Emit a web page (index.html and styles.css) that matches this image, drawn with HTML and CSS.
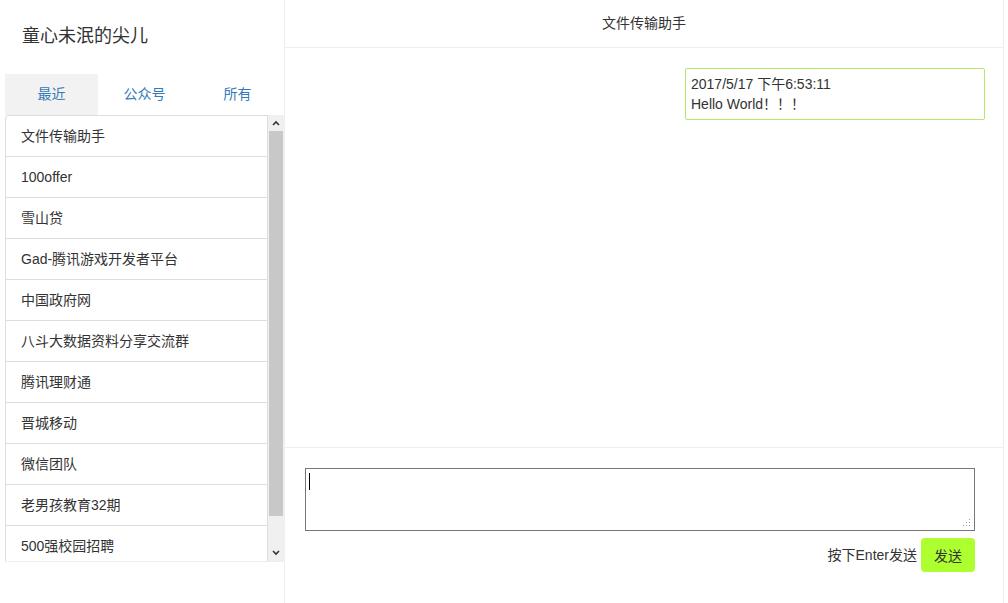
FILE: index.html
```html
<!DOCTYPE html>
<html lang="zh">
<head>
<meta charset="utf-8">
<title>WeChat</title>
<link rel="stylesheet" href="styles.css">
</head>
<body>
<div class="app">
  <aside class="side">
    <div class="user">童心未泯的尖儿</div>
    <div class="tabs">
      <div class="tab active">最近</div>
      <div class="tab">公众号</div>
      <div class="tab">所有</div>
    </div>
    <div class="listwrap">
      <ul class="list">
        <li>文件传输助手</li>
        <li>100offer</li>
        <li>雪山贷</li>
        <li>Gad-腾讯游戏开发者平台</li>
        <li>中国政府网</li>
        <li>八斗大数据资料分享交流群</li>
        <li>腾讯理财通</li>
        <li>晋城移动</li>
        <li>微信团队</li>
        <li>老男孩教育32期</li>
        <li>500强校园招聘</li>
      </ul>
      <div class="sbar">
        <div class="sbtn"><svg width="8" height="6" viewBox="0 0 8 6"><path d="M1 5 L4 2 L7 5" fill="none" stroke="#333" stroke-width="1.6"/></svg></div>
        <div class="thumb"></div>
        <div class="strack"></div>
        <div class="sbtn"><svg width="8" height="6" viewBox="0 0 8 6"><path d="M1 1 L4 4 L7 1" fill="none" stroke="#333" stroke-width="1.6"/></svg></div>
      </div>
    </div>
  </aside>
  <main class="chat">
    <header class="chat-head">文件传输助手</header>
    <section class="msgs">
      <div class="bubble">
        <div>2017/5/17 下午6:53:11</div>
        <div>Hello World！！！</div>
      </div>
    </section>
    <footer class="composer">
      <div class="input"><span class="caret"></span><svg class="grip" width="8" height="8" viewBox="0 0 8 8"><g fill="#999"><rect x="6" y="0" width="1" height="1"/><rect x="3" y="3" width="1" height="1"/><rect x="6" y="3" width="1" height="1"/><rect x="0" y="6" width="1" height="1"/><rect x="3" y="6" width="1" height="1"/><rect x="6" y="6" width="1" height="1"/></g></svg></div>
      <div class="actions">
        <span class="hint">按下Enter发送</span>
        <button class="send">发送</button>
      </div>
    </footer>
  </main>
</div>
</body>
</html>
```
FILE: styles.css
```css
* { box-sizing: border-box; }
html, body { margin: 0; padding: 0; }
body {
  font-family: "Liberation Sans", "Noto Sans CJK SC", sans-serif;
  font-size: 14px;
  color: #333;
  background: #fff;
  width: 1008px;
  height: 603px;
  overflow: hidden;
}
.app { display: flex; height: 603px; }
.side {
  width: 285px;
  border-right: 1px solid #eee;
  padding-left: 5px;
  display: flex;
  flex-direction: column;
}
.user {
  height: 74px;
  padding: 24px 0 0 17px;
  font-size: 18px;
  line-height: 24px;
  color: #333;
}
.tabs { display: flex; height: 41px; }
.tab {
  width: 93px;
  text-align: center;
  line-height: 41px;
  color: #337ab7;
  font-size: 14px;
}
.tab.active { background: #f2f2f2; }
.listwrap {
  display: flex;
  height: 447px;
  border-bottom: 1px solid #eee;
  overflow: hidden;
}
.list {
  list-style: none;
  margin: 0;
  padding: 0;
  width: 263px;
  border-left: 1px solid #ddd;
  border-right: 1px solid #ddd;
  border-top-left-radius: 4px;
  border-top: 1px solid #ddd;
}
.list li {
  height: 41px;
  line-height: 40px;
  padding-left: 15px;
  border-bottom: 1px solid #ddd;
  white-space: nowrap;
}
.sbar {
  width: 16px;
  background: #f0f0f0;
  display: flex;
  flex-direction: column;
}
.sbtn {
  height: 16px;
  display: flex;
  align-items: center;
  justify-content: center;
}
.thumb { height: 385px; background: #c8c8c8; margin: 0 1px; }
.strack { flex: 1; }
.chat {
  width: 719px;
  border-right: 1px solid #eee;
  display: flex;
  flex-direction: column;
}
.chat-head {
  height: 48px;
  border-bottom: 1px solid #eee;
  text-align: center;
  line-height: 46px;
  font-size: 14px;
}
.msgs {
  height: 400px;
  border-bottom: 1px solid #eee;
  padding: 20px 18px 0 0;
  display: flex;
  flex-direction: column;
  align-items: flex-end;
}
.bubble {
  width: 300px;
  border: 1px solid #b3e86a;
  border-radius: 2px;
  padding: 5px 5px 5px 5px;
  line-height: 20px;
  font-size: 14px;
}
.composer { padding: 20px 28px 0 20px; }
.input {
  height: 63px;
  border: 1px solid #767676;
  position: relative;
}
.caret {
  position: absolute;
  left: 3px;
  top: 4px;
  width: 1px;
  height: 17px;
  background: #000;
}
.grip { position: absolute; right: 3px; bottom: 3px; }
.actions {
  display: flex;
  justify-content: flex-end;
  align-items: center;
  margin-top: 7px;
  gap: 4px;
}
.hint { font-size: 14px; color: #333; margin-top: -2px; }
.send {
  font-family: "Liberation Sans", "Noto Sans CJK SC", sans-serif;
  width: 54px;
  height: 34px;
  border: none;
  border-radius: 4px;
  background: #adff2f;
  color: #333;
  font-size: 14px;
  padding: 0;
}
```
